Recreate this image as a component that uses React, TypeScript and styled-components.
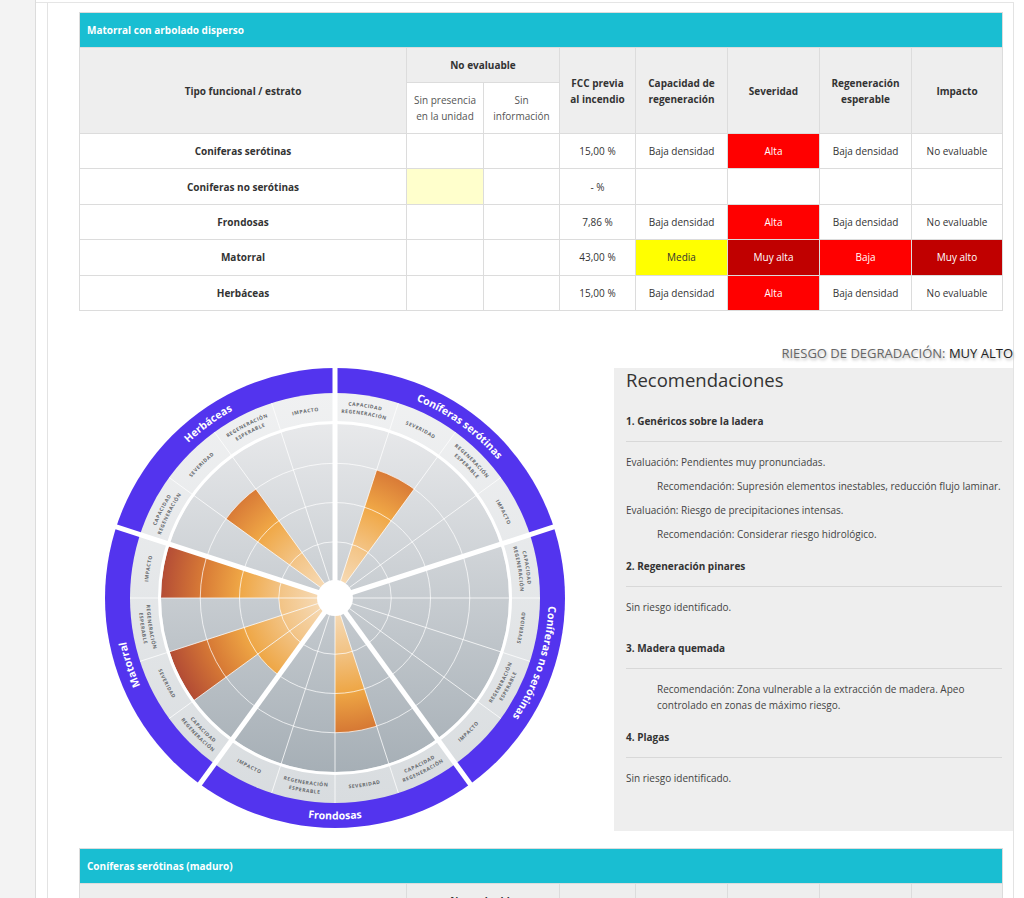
import React from 'react';
import styled, { createGlobalStyle } from 'styled-components';

type Tone = 'red' | 'dark' | 'yellow' | 'pale';

interface CellData {
  text?: string;
  tone?: Tone;
}

interface RowData {
  name: string;
  cells: CellData[];
}

const GlobalStyle = createGlobalStyle`
  html, body {
    margin: 0;
    padding: 0;
    background: #fff;
  }
  body {
    font-family: 'Open Sans', 'Noto Sans', Arial, sans-serif;
    color: #333;
  }
`;

const Shell = styled.div`
  display: flex;
  min-height: 898px;
  overflow: hidden;
`;

const Sidebar = styled.aside`
  width: 35px;
  flex-shrink: 0;
  background: #f3f3f3;
  border-right: 1px solid #dcdcdc;
`;

const Frame = styled.div`
  display: flex;
  margin-top: 2px;
  padding-left: 11px;
  border-top: 1px solid #e5e5e5;
`;

const Main = styled.main`
  width: 934px;
  padding: 9px 0 0 31px;
  border-left: 1px solid #e3e3e3;
  border-right: 1px solid #e3e3e3;
`;

const Table = styled.table`
  width: 923px;
  border-collapse: collapse;
  table-layout: fixed;
  font-size: 10px;
`;

const TitleCell = styled.th`
  height: 34px;
  padding: 0 7px;
  background: #19bed2;
  color: #fff;
  font-weight: 700;
  text-align: left;
  border: 1px solid #dcdcdc;
`;

const HeadCell = styled.th<{ $sub?: boolean; $h: number }>`
  height: ${(p) => p.$h}px;
  padding: 0 ${(p) => (p.$sub ? 3 : 8)}px;
  background: ${(p) => (p.$sub ? '#fff' : '#eeeeee')};
  color: ${(p) => (p.$sub ? '#555' : '#333')};
  font-weight: ${(p) => (p.$sub ? 400 : 700)};
  line-height: 16px;
  text-align: center;
  border: 1px solid #dcdcdc;
`;

const toneBg: Record<Tone, string> = {
  red: '#ff0000',
  dark: '#c00000',
  yellow: '#ffff00',
  pale: '#ffffcc',
};

const Cell = styled.td<{ $tone?: Tone; $name?: boolean }>`
  height: 34.4px;
  padding: 0 4px;
  text-align: center;
  font-weight: ${(p) => (p.$name ? 700 : 400)};
  color: ${(p) => (p.$tone === 'red' || p.$tone === 'dark' ? '#fff' : '#333')};
  background: ${(p) => (p.$tone ? toneBg[p.$tone] : '#fff')};
  border: 1px solid #dcdcdc;
`;

const RiskTitle = styled.div`
  margin-top: 33px;
  font-size: 13px;
  line-height: 18px;
  text-align: right;
  color: #666;
  text-shadow: 1px 2px 3px rgba(0, 0, 0, 0.3);
`;

const RiskValue = styled.span`
  color: #222;
`;

const RiskRow = styled.div`
  display: flex;
  justify-content: space-between;
  align-items: flex-start;
  margin-top: 5px;
  padding-left: 25px;
`;

const Panel = styled.section`
  box-sizing: border-box;
  display: flex;
  flex-direction: column;
  width: 399px;
  height: 463px;
  margin-top: 1px;
  padding: 0 11px 0 12px;
  background: #eeeeee;
  font-size: 10px;
  color: #444;
`;

const PanelTitle = styled.h2`
  margin: 0 0 13px;
  font-size: 18.5px;
  line-height: 24px;
  font-weight: 400;
  color: #333;
`;

const SectionTitle = styled.h3`
  margin: 8px 0 0;
  font-size: 10px;
  line-height: 16px;
  font-weight: 700;
  color: #333;
`;

const Divider = styled.hr`
  width: 100%;
  height: 0;
  margin: 12px 0;
  border: 0;
  border-top: 1px solid #d8d8d8;
`;

const Line = styled.p<{ $indent?: boolean; $loose?: boolean }>`
  margin: 0 0 ${(p) => (p.$loose ? 17 : 8)}px;
  padding-left: ${(p) => (p.$indent ? 31 : 0)}px;
  line-height: 16px;
  white-space: nowrap;
`;

const NextTable = styled.div`
  margin-top: 17px;
`;

const rows: RowData[] = [
  {
    name: 'Coniferas serótinas',
    cells: [{}, {}, { text: '15,00 %' }, { text: 'Baja densidad' }, { text: 'Alta', tone: 'red' }, { text: 'Baja densidad' }, { text: 'No evaluable' }],
  },
  {
    name: 'Coniferas no serótinas',
    cells: [{ tone: 'pale' }, {}, { text: '- %' }, {}, {}, {}, {}],
  },
  {
    name: 'Frondosas',
    cells: [{}, {}, { text: '7,86 %' }, { text: 'Baja densidad' }, { text: 'Alta', tone: 'red' }, { text: 'Baja densidad' }, { text: 'No evaluable' }],
  },
  {
    name: 'Matorral',
    cells: [{}, {}, { text: '43,00 %' }, { text: 'Media', tone: 'yellow' }, { text: 'Muy alta', tone: 'dark' }, { text: 'Baja', tone: 'red' }, { text: 'Muy alto', tone: 'dark' }],
  },
  {
    name: 'Herbáceas',
    cells: [{}, {}, { text: '15,00 %' }, { text: 'Baja densidad' }, { text: 'Alta', tone: 'red' }, { text: 'Baja densidad' }, { text: 'No evaluable' }],
  },
];

const colWidths = [327, 77, 76, 76, 92, 92, 92, 91];

function EvalTable({ title, data }: { title: string; data: RowData[] }) {
  return (
    <Table>
      <colgroup>
        {colWidths.map((w, i) => (
          <col key={i} style={{ width: w }} />
        ))}
      </colgroup>
      <thead>
        <tr>
          <TitleCell colSpan={8}>{title}</TitleCell>
        </tr>
        <tr>
          <HeadCell $h={34} rowSpan={2}>Tipo funcional / estrato</HeadCell>
          <HeadCell $h={34} colSpan={2}>No evaluable</HeadCell>
          <HeadCell $h={34} rowSpan={2}>FCC previa al incendio</HeadCell>
          <HeadCell $h={34} rowSpan={2}>Capacidad de regeneración</HeadCell>
          <HeadCell $h={34} rowSpan={2}>Severidad</HeadCell>
          <HeadCell $h={34} rowSpan={2}>Regeneración esperable</HeadCell>
          <HeadCell $h={34} rowSpan={2}>Impacto</HeadCell>
        </tr>
        <tr>
          <HeadCell $h={50} $sub>Sin presencia en la unidad</HeadCell>
          <HeadCell $h={50} $sub>Sin información</HeadCell>
        </tr>
      </thead>
      <tbody>
        {data.map((row) => (
          <tr key={row.name}>
            <Cell $name>{row.name}</Cell>
            {row.cells.map((c, i) => (
              <Cell key={i} $tone={c.tone}>
                {c.text}
              </Cell>
            ))}
          </tr>
        ))}
      </tbody>
    </Table>
  );
}

// ---- radial chart ----

const CX = 231;
const CY = 231;
const R_HOLE = 18;
const R_INNER = 174;
const R_RING = 205;
const R_OUTER = 230;
const STEP = (R_INNER - 17) / 4;

const rad = (d: number) => (d * Math.PI) / 180;
const pt = (r: number, a: number) =>
  `${(CX + r * Math.sin(rad(a))).toFixed(2)} ${(CY - r * Math.cos(rad(a))).toFixed(2)}`;

const sector = (r0: number, r1: number, a0: number, a1: number) =>
  `M ${pt(r1, a0)} A ${r1} ${r1} 0 0 1 ${pt(r1, a1)} L ${pt(r0, a1)} A ${r0} ${r0} 0 0 0 ${pt(r0, a0)} Z`;

const arc = (r: number, a0: number, a1: number, flip: boolean) =>
  flip
    ? `M ${pt(r, a1)} A ${r} ${r} 0 0 0 ${pt(r, a0)}`
    : `M ${pt(r, a0)} A ${r} ${r} 0 0 1 ${pt(r, a1)}`;

const groups = [
  { name: 'Coníferas serótinas', vals: [0, 3, 0, 0] },
  { name: 'Coníferas no serótinas', vals: [0, 0, 0, 0] },
  { name: 'Frondosas', vals: [0, 3, 0, 0] },
  { name: 'Matorral', vals: [2, 4, 1, 4] },
  { name: 'Herbáceas', vals: [0, 3, 0, 0] },
];

const subLabels = [['CAPACIDAD', 'REGENERACIÓN'], ['SEVERIDAD'], ['REGENERACIÓN', 'ESPERABLE'], ['IMPACTO']];

const ChartBox = styled.div`
  width: 462px;
  height: 462px;
  flex-shrink: 0;
`;

const GroupText = styled.text`
  font-family: 'Open Sans', 'Noto Sans', sans-serif;
  font-size: 10.5px;
  font-weight: 700;
  fill: #fff;
`;

const SubText = styled.text`
  font-family: 'Open Sans', 'Noto Sans', sans-serif;
  font-size: 5px;
  font-weight: 700;
  letter-spacing: 0.55px;
  fill: #66696d;
`;

function RadialChart() {
  const sectors: { g: number; s: number; a0: number; a1: number }[] = [];
  groups.forEach((_, g) =>
    subLabels.forEach((__, s) => {
      const a0 = g * 72 + s * 18;
      sectors.push({ g, s, a0, a1: a0 + 18 });
    })
  );

  return (
    <ChartBox>
      <svg width="462" height="462" viewBox="0 0 462 462">
        <defs>
          <linearGradient id="innerFill" x1="0" y1={CY - R_INNER} x2="0" y2={CY + R_INNER} gradientUnits="userSpaceOnUse">
            <stop offset="0" stopColor="#e8e9eb" />
            <stop offset="1" stopColor="#a6afb6" />
          </linearGradient>
          <linearGradient id="ringFill" x1="0" y1={CY - R_RING} x2="0" y2={CY + R_RING} gradientUnits="userSpaceOnUse">
            <stop offset="0" stopColor="#f0f1f2" />
            <stop offset="1" stopColor="#d8dcdf" />
          </linearGradient>
          <radialGradient id="barFill" cx={CX} cy={CY} r={R_INNER} gradientUnits="userSpaceOnUse">
            <stop offset="0" stopColor="#fbe4c6" />
            <stop offset="0.3" stopColor="#f6c584" />
            <stop offset="0.55" stopColor="#f2a43b" />
            <stop offset="0.77" stopColor="#d9742a" />
            <stop offset="1" stopColor="#b2432a" />
          </radialGradient>
          {groups.map((grp, g) => {
            const mid = g * 72 + 36;
            const flip = mid > 135 && mid < 225;
            return <path key={grp.name} id={`grp-${g}`} d={arc(flip ? 221.5 : 213.5, g * 72 - 10, g * 72 + 82, flip)} />;
          })}
          {sectors.map(({ g, s, a0, a1 }) => {
            const mid = (a0 + a1) / 2;
            const flip = mid > 90 && mid < 270;
            const lines = subLabels[s];
            const radii =
              lines.length === 1
                ? [flip ? 190.8 : 187.5]
                : flip
                ? [188.6, 196.4]
                : [193, 185.2];
            return radii.map((r, li) => (
              <path key={`${g}-${s}-${li}`} id={`sub-${g}-${s}-${li}`} d={arc(r, a0 - 8, a1 + 8, flip)} />
            ));
          })}
        </defs>

        <circle cx={CX} cy={CY} r={R_OUTER} fill="#5334ee" />
        <circle cx={CX} cy={CY} r={R_RING} fill="url(#ringFill)" />
        <circle cx={CX} cy={CY} r={R_INNER} fill="url(#innerFill)" />

        {sectors.map(({ g, s, a0, a1 }) => {
          const v = groups[g].vals[s];
          if (!v) return null;
          const r1 = v === 4 ? R_INNER : 17 + STEP * v;
          return <path key={`bar-${g}-${s}`} d={sector(R_HOLE - 2, r1, a0, a1)} fill="url(#barFill)" opacity="0.93" />;
        })}

        {[1, 2, 3].map((k) => (
          <circle key={k} cx={CX} cy={CY} r={17 + STEP * k} fill="none" stroke="#fff" strokeWidth="0.9" strokeOpacity="0.8" />
        ))}
        {sectors.map(({ a0 }) => (
          <line
            key={`ray-${a0}`}
            x1={CX + R_HOLE * Math.sin(rad(a0))}
            y1={CY - R_HOLE * Math.cos(rad(a0))}
            x2={CX + R_RING * Math.sin(rad(a0))}
            y2={CY - R_RING * Math.cos(rad(a0))}
            stroke="#fff"
            strokeWidth="0.9"
            strokeOpacity="0.85"
          />
        ))}
        <circle cx={CX} cy={CY} r={R_INNER + 1.5} fill="none" stroke="#fff" strokeWidth="3" />
        {groups.map((grp, g) => (
          <line
            key={`gap-${grp.name}`}
            x1={CX}
            y1={CY}
            x2={CX + 234 * Math.sin(rad(g * 72))}
            y2={CY - 234 * Math.cos(rad(g * 72))}
            stroke="#fff"
            strokeWidth="5"
          />
        ))}
        <circle cx={CX} cy={CY} r={R_HOLE} fill="#fff" />

        {groups.map((grp, g) => (
          <GroupText key={`gt-${g}`}>
            <textPath href={`#grp-${g}`} startOffset="50%" textAnchor="middle">
              {grp.name}
            </textPath>
          </GroupText>
        ))}
        {sectors.map(({ g, s }) =>
          subLabels[s].map((txt, li) => (
            <SubText key={`st-${g}-${s}-${li}`}>
              <textPath href={`#sub-${g}-${s}-${li}`} startOffset="50%" textAnchor="middle">
                {txt}
              </textPath>
            </SubText>
          ))
        )}
      </svg>
    </ChartBox>
  );
}

function Recommendations() {
  return (
    <Panel>
      <PanelTitle>Recomendaciones</PanelTitle>
      <SectionTitle>1. Genéricos sobre la ladera</SectionTitle>
      <Divider />
      <Line>Evaluación: Pendientes muy pronunciadas.</Line>
      <Line $indent>Recomendación: Supresión elementos inestables, reducción flujo laminar.</Line>
      <Line>Evaluación: Riesgo de precipitaciones intensas.</Line>
      <Line $indent>Recomendación: Considerar riesgo hidrológico.</Line>
      <SectionTitle>2. Regeneración pinares</SectionTitle>
      <Divider />
      <Line $loose>Sin riesgo identificado.</Line>
      <SectionTitle>3. Madera quemada</SectionTitle>
      <Divider />
      <Line $indent>
        Recomendación: Zona vulnerable a la extracción de madera. Apeo
        <br />
        controlado en zonas de máximo riesgo.
      </Line>
      <SectionTitle>4. Plagas</SectionTitle>
      <Divider />
      <Line>Sin riesgo identificado.</Line>
    </Panel>
  );
}

export default function App() {
  return (
    <>
      <GlobalStyle />
      <Shell>
        <Sidebar />
        <Frame>
          <Main>
            <EvalTable title="Matorral con arbolado disperso" data={rows} />
            <RiskTitle>
              RIESGO DE DEGRADACIÓN: <RiskValue>MUY ALTO</RiskValue>
            </RiskTitle>
            <RiskRow>
              <RadialChart />
              <Recommendations />
            </RiskRow>
            <NextTable>
              <EvalTable title="Coníferas serótinas (maduro)" data={[]} />
            </NextTable>
          </Main>
        </Frame>
      </Shell>
    </>
  );
}
